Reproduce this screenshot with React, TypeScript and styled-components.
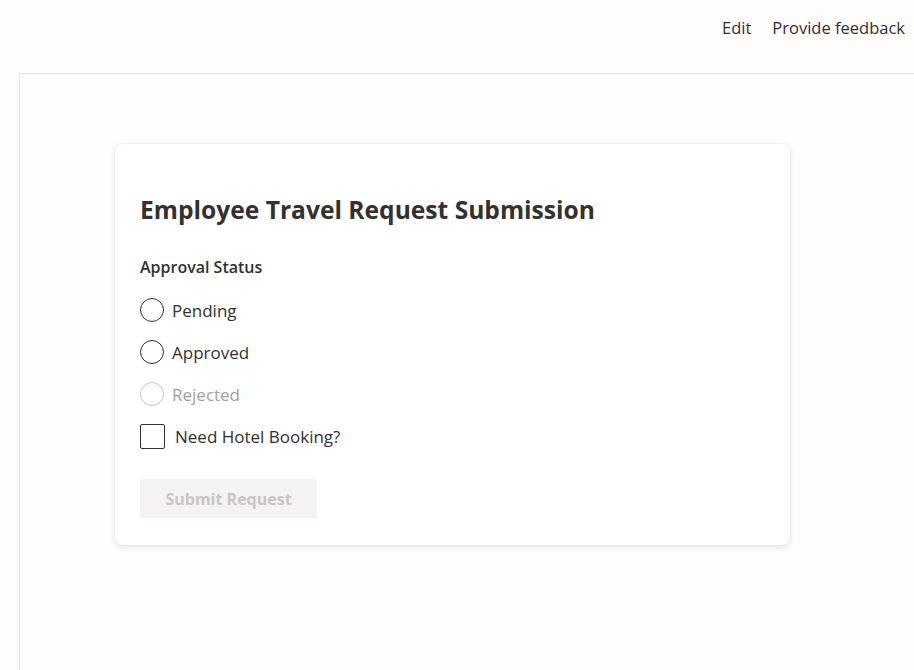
import React from "react";
import styled, { createGlobalStyle } from "styled-components";

const GlobalStyle = createGlobalStyle`
  html, body {
    margin: 0;
    padding: 0;
    background: #fefdfc;
    font-family: "Open Sans", "Noto Sans", sans-serif;
    color: #323130;
  }
`;

const Page = styled.div`
  display: flex;
  flex-direction: column;
  min-height: 670px;
`;

const TopBar = styled.div`
  height: 54px;
  display: flex;
  align-items: center;
  justify-content: flex-end;
  gap: 21px;
  padding-right: 9px;
  margin-bottom: 19px;
`;

const TopLink = styled.span`
  font-size: 16.5px;
  color: #323130;
`;

const Canvas = styled.div`
  flex: 1;
  margin-left: 19px;
  border-top: 1px solid #e6e4e2;
  border-left: 1px solid #e6e4e2;
  padding: 70px 0 0 95px;
`;

const Card = styled.div`
  width: 675px;
  box-sizing: border-box;
  background: #fff;
  border-radius: 8px;
  box-shadow: 0 0 2px rgba(0, 0, 0, 0.07), 0 2px 6px rgba(0, 0, 0, 0.1);
  padding: 50px 25px 27px;
  display: flex;
  flex-direction: column;
`;

const Title = styled.h1`
  margin: 0;
  font-size: 24.6px;
  line-height: 32px;
  font-weight: 700;
`;

const GroupLabel = styled.div`
  margin-top: 30px;
  font-size: 16px;
  line-height: 22px;
  font-weight: 600;
`;

const Options = styled.div`
  margin-top: 11px;
  display: flex;
  flex-direction: column;
`;

const Row = styled.label<{ $disabled?: boolean }>`
  height: 42px;
  display: flex;
  align-items: center;
  gap: 8px;
  font-size: 17px;
  color: ${(p) => (p.$disabled ? "#a19f9d" : "#323130")};
`;

const RadioCircle = styled.span<{ $disabled?: boolean }>`
  width: 24px;
  height: 24px;
  box-sizing: border-box;
  border-radius: 50%;
  border: 1px solid ${(p) => (p.$disabled ? "#c8c6c4" : "#323130")};
`;

const Box = styled.span`
  width: 25px;
  height: 25px;
  box-sizing: border-box;
  border-radius: 2px;
  border: 1px solid #323130;
  margin-right: 2px;
`;

const Submit = styled.button`
  margin-top: 22px;
  align-self: flex-start;
  width: 177px;
  height: 39px;
  border: none;
  border-radius: 3px;
  background: #f4f2f2;
  color: #c8c6c4;
  font-family: inherit;
  font-size: 16px;
  font-weight: 700;
`;

const options = [
  { label: "Pending" },
  { label: "Approved" },
  { label: "Rejected", disabled: true },
];

export default function App() {
  return (
    <Page>
      <GlobalStyle />
      <TopBar>
        <TopLink>Edit</TopLink>
        <TopLink>Provide feedback</TopLink>
      </TopBar>
      <Canvas>
        <Card>
          <Title>Employee Travel Request Submission</Title>
          <GroupLabel>Approval Status</GroupLabel>
          <Options>
            {options.map((o) => (
              <Row key={o.label} $disabled={o.disabled}>
                <RadioCircle $disabled={o.disabled} />
                {o.label}
              </Row>
            ))}
            <Row>
              <Box />
              Need Hotel Booking?
            </Row>
          </Options>
          <Submit disabled>Submit Request</Submit>
        </Card>
      </Canvas>
    </Page>
  );
}
